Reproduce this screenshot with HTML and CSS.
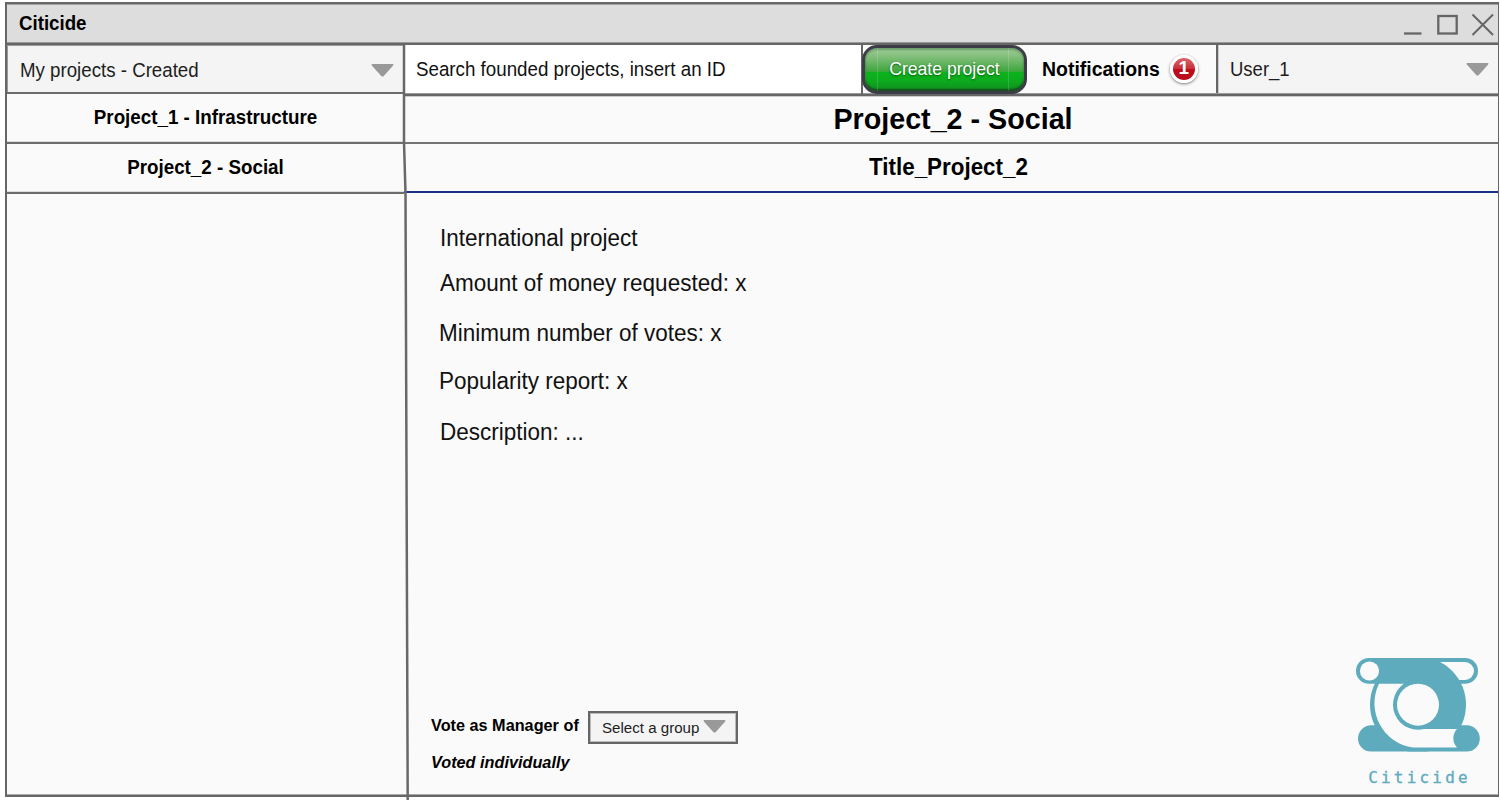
FILE: index.html
```
<!DOCTYPE html>
<html lang="en">
<head>
<meta charset="utf-8">
<title>Citicide</title>
<link rel="stylesheet" href="styles.css">
</head>
<body>
<div class="window">
  <header class="titlebar">
    <span class="app-name tall">Citicide</span>
    <svg class="controls" width="94" height="24" viewBox="0 0 94 24" fill="none" stroke="#666">
      <path d="M2 21.500H19.500" stroke-width="2.300"/>
      <rect x="36.300" y="4" width="18.400" height="17.500" stroke-width="2.300"/>
      <path d="M70.500 2.500L91 23M91 2.500L70.500 23" stroke-width="2"/>
    </svg>
  </header>
  <div class="columns">
    <aside class="sidebar">
      <div class="select projects-select"><span class="tall">My projects - Created</span>
        <svg width="23" height="13" viewBox="0 0 23 13"><path d="M1 0H22Q23 .8 22 1.800L12.500 12.200Q11.500 13 10.500 12.200L1 1.800Q0 .8 1 0Z" fill="#999"/></svg>
      </div>
      <div class="side-item"><span class="tall">Project_1 - Infrastructure</span></div>
      <div class="side-item"><span class="tall">Project_2 - Social</span></div>
    </aside>
    <main class="main">
      <nav class="toolbar">
        <div class="search"><span class="tall">Search founded projects, insert an ID</span></div>
        <div class="create-wrap"><button class="create"><span class="tall">Create project</span></button></div>
        <div class="notes"><span class="tall">Notifications</span><span class="badge">1</span></div>
        <div class="select user-select"><span class="tall">User_1</span>
          <svg width="23" height="13" viewBox="0 0 23 13"><path d="M1 0H22Q23 .8 22 1.800L12.500 12.200Q11.500 13 10.500 12.200L1 1.800Q0 .8 1 0Z" fill="#999"/></svg>
        </div>
      </nav>
      <h1 class="heading">Project_2 - Social</h1>
      <h2 class="subheading"><span class="tall">Title_Project_2</span></h2>
      <section class="detail">
        <div class="facts">
          <p class="fact fact-scope tall">International project</p>
          <p class="fact fact-money tall">Amount of money requested: x</p>
          <p class="fact fact-votes tall">Minimum number of votes: x</p>
          <p class="fact fact-report tall">Popularity report: x</p>
          <p class="fact fact-desc tall">Description: ...</p>
        </div>
        <div class="bottom">
          <div class="voting">
            <div class="vote-row">
              <span class="vote-label tall">Vote as Manager of</span>
              <div class="group-select"><span>Select a group</span>
                <svg width="23" height="13" viewBox="0 0 23 13"><path d="M1 0H22Q23 .8 22 1.800L12.500 12.200Q11.500 13 10.500 12.200L1 1.800Q0 .8 1 0Z" fill="#999"/></svg>
              </div>
            </div>
            <p class="voted tall">Voted individually</p>
          </div>
          <div class="brand">
            <svg width="126" height="96" viewBox="15 17 126 96">
              <defs><clipPath id="band"><rect x="15" y="18" width="126" height="93.600"/></clipPath></defs>
              <g fill="#5dabbd">
                <rect x="16" y="18" width="122" height="25.800" rx="12.900"/>
                <rect x="85" y="22" width="49" height="18" rx="9" fill="#fafafa"/>
                <circle cx="78" cy="64.700" r="48" clip-path="url(#band)"/>
                <rect x="18" y="85.300" width="121.800" height="26.300" rx="13.100"/>
                <path d="M39 43.800A44.500 44.500 0 0 0 73 107.500H117A13.500 13.500 0 0 1 117 89H78A25 25 0 0 1 64 43.800Z" fill="#fafafa"/>
                <circle cx="78" cy="64.700" r="25"/>
                <circle cx="78" cy="64.700" r="21" fill="#fafafa"/>
                <circle cx="29.500" cy="31" r="9.600" fill="#fafafa"/>
              </g>
            </svg>
            <span class="brand-name">Citicide</span>
          </div>
        </div>
      </section>
    </main>
  </div>
  <svg class="divider" width="12" height="756" viewBox="400 44 12 756"><path d="M404 44V142L405.500 193L407.700 800" fill="none" stroke="#686868" stroke-width="2.500"/></svg>
</div>
</body>
</html>
```
FILE: styles.css
```
* { box-sizing: border-box; }
body {
  margin: 0;
  background: #fff;
  font-family: "Liberation Sans", Arial, sans-serif;
  color: #000;
}
h1, h2, p { margin: 0; }
svg { display: block; flex: none; }
.tall { display: inline-block; transform: scaleY(1.05); }
.window {
  position: relative;
  display: flex;
  flex-direction: column;
  width: 1500px;
  height: 800px;
  padding: 2px 1px 3px 5px;
}
.titlebar {
  display: flex;
  justify-content: space-between;
  height: 43px;
  border: 2px solid #666;
  border-right-width: 1px;
  box-shadow: inset 0 1px #a2a2a2, inset 0 -1px #999;
  background: #ddd;
  padding: 8px 2px 0 12px;
}
.app-name { margin-top: 2px; font-weight: bold; font-size: 18.700px; line-height: 19px; height: 19px; }
.columns {
  display: flex;
  flex: 1;
  background: #fafafa;
  border: solid #666;
  border-width: 0 1px 2px 2px;
  box-shadow: inset 0 -1px #aaa;
}
.sidebar { width: 397px; }
.select {
  display: flex;
  align-items: center;
  justify-content: space-between;
  background: #f4f4f4;
  color: #1d1d1d;
  font-size: 18.700px;
}
.projects-select {
  height: 49px;
  padding: 3px 10px 0 13px;
  border-bottom: 2px solid #6c6c6c;
  box-shadow: inset 1px 1px #999;
}
.projects-select span { padding-top: 2px; }
.side-item {
  height: 50px;
  border-bottom: 2px solid #6c6c6c;
  box-shadow: inset 0 -1px #ddd;
  font-weight: bold;
  font-size: 18.800px;
  line-height: 47px;
  text-align: center;
}
.main { display: flex; flex-direction: column; flex: 1; min-width: 0; }
.toolbar {
  display: flex;
  height: 51px;
  border-bottom: 2px solid #666;
  box-shadow: inset 0 -1px #999;
}
.search {
  width: 457px;
  background: #fff;
  font-size: 18.760px;
  line-height: 50px;
  padding-left: 12px;
  color: #111;
  height: 48px;
}
.create-wrap { width: 169px; border-left: 2px solid #666; }
.create {
  position: relative;
  width: 165px;
  height: 49px;
  margin-left: -1px;
  padding: 0 0 1px;
  border: 3px solid #3d3d47;
  border-radius: 15px;
  background: linear-gradient(#a0cc9a 0, #79bb73 25%, #3aa53a 56%, #0bb31d 57%, #0cab1c 75%, #109022 100%);
  box-shadow: inset 0 2px 2px #6b9b6b, inset 0 -2px 2px #164b1c;
  color: #fff;
  font: 17.600px "Liberation Sans", Arial, sans-serif;
  text-shadow: 0 1px 2px #075b0d;
}
.create::after {
  content: "";
  position: absolute;
  inset: 0 15px 0 12px;
  border: solid rgba(255, 255, 255, .15);
  border-width: 0 1px;
}
.notes {
  display: flex;
  align-items: center;
  width: 186px;
  padding-left: 12px;
  font-weight: bold;
  font-size: 19.450px;
}
.badge {
  width: 28px;
  height: 28px;
  margin: 0 0 1px 10px;
  border: 3px solid #fff;
  border-radius: 50%;
  background: linear-gradient(#dc6269 0, #cb2c37 50%, #bd0c1b 51%, #b90d1b 100%);
  box-shadow: 0 1px 3px #777;
  color: #fff;
  font-size: 19px;
  line-height: 20px;
  text-align: center;
}
.user-select {
  flex: 1;
  border-left: 2px solid #666;
  box-shadow: inset 1px 0 #ccc;
  margin-bottom: 1px;
  padding: 0 9px 0 12px;
}
.user-select span { font-size: 18.500px; padding-top: 1px; }
.heading {
  height: 48px;
  border-bottom: 2px solid #747474;
  box-shadow: inset 0 1px #ccc;
  padding-left: 4px;
  font-size: 28.700px;
  line-height: 46px;
  text-align: center;
}
.subheading {
  height: 49px;
  border-bottom: 2px solid #1c3184;
  padding-right: 5px;
  font-size: 22.400px;
  line-height: 48px;
  text-align: center;
}
.detail {
  display: flex;
  flex-direction: column;
  justify-content: space-between;
  flex: 1;
  padding: 32px 17px 7px 27px;
}
.facts {
  display: flex;
  flex-direction: column;
  align-items: flex-start;
  padding-left: 9px;
  color: #111;
  font-size: 22.500px;
}
.fact { line-height: 28px; }
.fact-scope { margin-bottom: 17px; }
.fact-money { margin-bottom: 22px; }
.fact-votes { margin-left: -1px; margin-bottom: 20px; }
.fact-report { margin-left: -1px; margin-bottom: 23px; }
.bottom { display: flex; justify-content: space-between; align-items: flex-end; }
.voting { padding-bottom: 16px; }
.vote-row { display: flex; align-items: center; }
.vote-label { width: 157px; padding-bottom: 4px; font-weight: bold; font-size: 16.250px; }
.group-select {
  display: flex;
  align-items: center;
  width: 150px;
  height: 33px;
  padding: 0 0 0 12px;
  border: 2px solid #666;
  box-shadow: inset 0 0 0 1px #bbb;
  background: #f4f4f4;
  color: #1d1d1d;
  font-size: 15.100px;
}
.group-select svg { margin: 0 0 2px 4px; }
.voted { margin-top: 8px; font-weight: bold; font-style: italic; font-size: 16.250px; line-height: 20px; }
.brand { display: flex; flex-direction: column; align-items: center; width: 126px; padding-bottom: 1px; }
.brand-name {
  margin-top: 15px;
  padding-left: 3px;
  color: #5dabbd;
  font: 16px/19px "DejaVu Sans Mono", monospace;
  letter-spacing: 3.200px;
  -webkit-text-stroke: .3px #5dabbd;
}
.divider { position: absolute; left: 400px; top: 44px; }
```
